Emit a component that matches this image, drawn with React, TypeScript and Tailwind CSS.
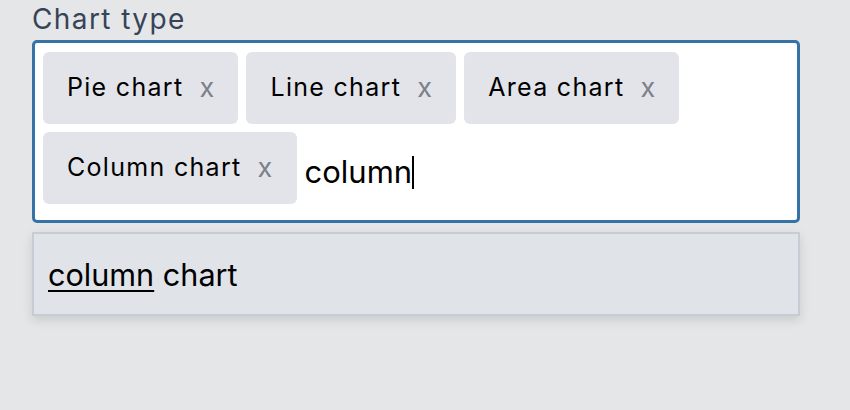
const tags = ["Pie chart", "Line chart", "Area chart", "Column chart"];

function Tag({ label }: { label: string }) {
  return (
    <div className="mr-2 mb-2 flex h-[72px] items-center gap-4 rounded-[6px] bg-[#e2e4e9] pl-6 pr-[23px] text-[25px] tracking-[1.3px] text-black">
      <span>{label}</span>
      <span className="text-[27px] text-[#7b808a]">x</span>
    </div>
  );
}

export default function App() {
  return (
    <div className="min-h-screen bg-[#e5e6e8] px-8 font-['Inter',sans-serif]">
      <label className="block h-[40px] pt-[1px] text-[28px] leading-[36px] tracking-[1.4px] text-[#374357]">
        Chart type
      </label>
      <div className="flex w-[768px] flex-wrap items-center rounded-[5px] border-[3px] border-[#3572a5] bg-white pl-2 pt-[9px] pb-2">
        {tags.map((t) => (
          <Tag key={t} label={t} />
        ))}
        <div className="mb-2 flex h-[72px] items-center pt-[9px] text-[31px] text-black">
          <span>column</span>
          <span className="h-[33px] w-[2px] bg-black" />
        </div>
      </div>
      <div className="mt-[9px] flex h-[84px] w-[768px] items-center border-2 border-[#c6cdd7] bg-[#e0e3e8] pl-[14px] pt-[2px] text-[30.6px] text-black shadow-[0_4px_10px_rgba(0,0,0,0.12)]">
        <span>
          <span className="underline decoration-2 underline-offset-[4px]">column</span> chart
        </span>
      </div>
    </div>
  );
}
